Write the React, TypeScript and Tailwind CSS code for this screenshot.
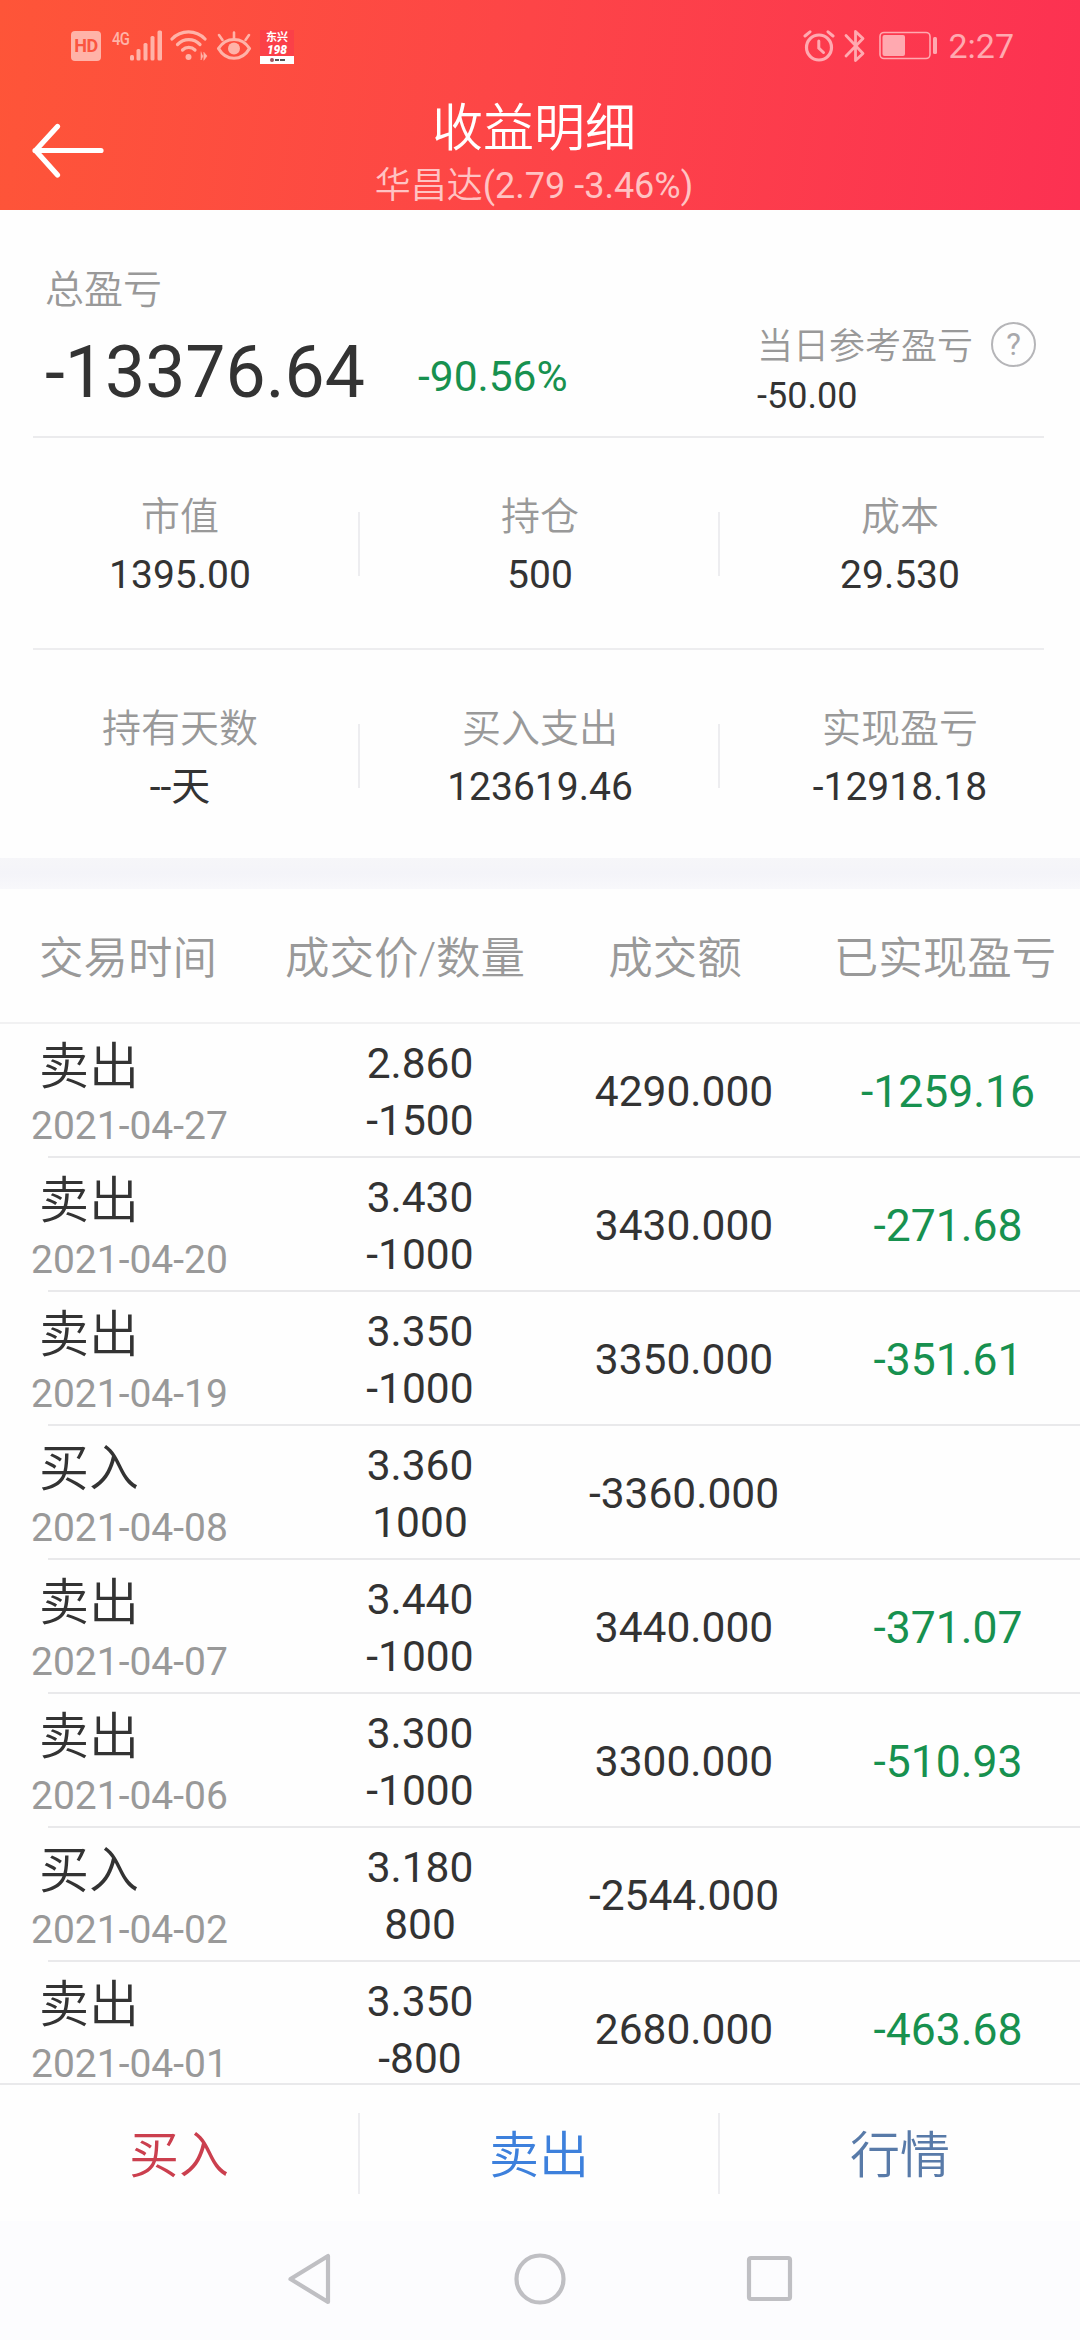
import React from "react";

type Stat = { label: string; value: string };
type Trade = {
  type: string;
  date: string;
  price: string;
  qty: string;
  amount: string;
  profit?: string;
};

const statRows: Stat[][] = [
  [
    { label: "市值", value: "1395.00" },
    { label: "持仓", value: "500" },
    { label: "成本", value: "29.530" },
  ],
  [
    { label: "持有天数", value: "--天" },
    { label: "买入支出", value: "123619.46" },
    { label: "实现盈亏", value: "-12918.18" },
  ],
];

const trades: Trade[] = [
  { type: "卖出", date: "2021-04-27", price: "2.860", qty: "-1500", amount: "4290.000", profit: "-1259.16" },
  { type: "卖出", date: "2021-04-20", price: "3.430", qty: "-1000", amount: "3430.000", profit: "-271.68" },
  { type: "卖出", date: "2021-04-19", price: "3.350", qty: "-1000", amount: "3350.000", profit: "-351.61" },
  { type: "买入", date: "2021-04-08", price: "3.360", qty: "1000", amount: "-3360.000" },
  { type: "卖出", date: "2021-04-07", price: "3.440", qty: "-1000", amount: "3440.000", profit: "-371.07" },
  { type: "卖出", date: "2021-04-06", price: "3.300", qty: "-1000", amount: "3300.000", profit: "-510.93" },
  { type: "买入", date: "2021-04-02", price: "3.180", qty: "800", amount: "-2544.000" },
  { type: "卖出", date: "2021-04-01", price: "3.350", qty: "-800", amount: "2680.000", profit: "-463.68" },
];

function HdIcon() {
  return (
    <span className="flex h-[30px] w-[30px] items-center justify-center rounded-[4px] bg-[#ffb3a8] text-[18px] leading-[30px] font-bold tracking-[-0.5px] text-[#fb5540]">
      HD
    </span>
  );
}

function SignalIcon() {
  return (
    <svg className="block" width="34" height="32" viewBox="0 0 34 32" fill="#ffb3a8">
      <rect x="1" y="25" width="4" height="5.500" rx="1.500" />
      <rect x="7.500" y="19" width="4" height="11.500" rx="1.500" />
      <rect x="14.500" y="13" width="4" height="17.500" rx="1.500" />
      <rect x="21.500" y="6" width="4" height="24.500" rx="1.500" />
      <rect x="28.500" y="0.500" width="4.500" height="30" rx="1.500" />
    </svg>
  );
}

function WifiIcon() {
  return (
    <svg className="block" width="38" height="32" viewBox="0 0 38 32" fill="none" stroke="#ffb3a8" strokeWidth="3.200" strokeLinecap="round">
      <path d="M2 9C11 -0.500 26 -0.500 35 9" />
      <path d="M7.500 14.500C14 8 23.500 8 30 14.500" />
      <path d="M12.500 20C16 16.500 21.500 16.500 25 20" />
      <circle cx="18.500" cy="27" r="3" fill="#ffb3a8" stroke="none" />
      <path d="M31 22v8l2-4M34 22.500l3 3.500l-3 4z" fill="#ffb3a8" strokeWidth="0.600" />
    </svg>
  );
}

function EyeIcon() {
  return (
    <svg className="block" width="36" height="32" viewBox="0 0 36 32" fill="none" stroke="#ffb3a8" strokeWidth="3.200" strokeLinecap="round" strokeLinejoin="round">
      <path d="M2.500 18.500C10 6.500 26 6.500 33.500 18.500C26 31.500 10 31.500 2.500 18.500Z" />
      <circle cx="18" cy="18.500" r="6" fill="#ffb3a8" stroke="none" />
      <path d="M18 2.500v6M3 5l3.500 5M33 5l-3.500 5" strokeWidth="2.600" />
    </svg>
  );
}

function BrokerBadge() {
  return (
    <span className="mt-[2px] flex h-[34px] w-[34px] flex-col items-center bg-[#fb4048] text-white">
      <span className="h-[13px] text-[11px] leading-[16px] font-bold">东兴</span>
      <span className="h-[13px] text-[12px] leading-[14px] font-black italic">198</span>
      <span className="flex h-[8px] w-[34px] items-center justify-center gap-[1px] bg-white">
        <i className="h-[4px] w-[4px] rounded-full bg-[#a05560]" />
        <i className="h-[2px] w-[4px] bg-[#555]" />
        <i className="h-[2px] w-[5px] bg-[#555]" />
      </span>
    </span>
  );
}

function AlarmIcon() {
  return (
    <svg className="block" width="32" height="32" viewBox="0 0 32 32" fill="none" stroke="#ffa9b0" strokeWidth="3.200" strokeLinecap="round">
      <circle cx="16" cy="17.500" r="12.500" />
      <path d="M15.800 11v7l4.700 4.500" strokeWidth="3" />
      <path d="M2 6l5-4.200M30 6l-5-4.200" strokeWidth="3" />
    </svg>
  );
}

function BluetoothIcon() {
  return (
    <svg className="block" width="22" height="34" viewBox="0 0 22 34" fill="none" stroke="#ffa9b0" strokeWidth="2.800" strokeLinecap="round" strokeLinejoin="round">
      <path d="M2 6.500L19 24.500L11.500 31.500V2.500L19 9.500L2 27" />
    </svg>
  );
}

function BatteryIcon() {
  return (
    <svg className="block" width="60" height="30" viewBox="0 0 60 30" fill="none">
      <rect x="1" y="1.500" width="50" height="26" rx="4" stroke="#ffa9b0" strokeWidth="1.600" />
      <rect x="3.500" y="4" width="22.500" height="21" rx="2" fill="#ffa9b0" />
      <rect x="54" y="6" width="4" height="17" rx="1.500" fill="#ffa9b0" />
    </svg>
  );
}

function Header() {
  return (
    <header className="relative h-[210px] shrink-0 bg-[linear-gradient(98deg,#fe5538_0%,#fd4547_48%,#fc3152_100%)]">
      <div className="flex h-[92px] items-center justify-between pr-[66px] pl-[71px]">
        <div className="flex items-center">
          <HdIcon />
          <span className="ml-[11px] flex h-[30px] w-[17px] items-start text-[19px] leading-[15px] font-medium tracking-[-1px] text-[#ffb3a8]">
            <span className="origin-left scale-x-[0.78]">4G</span>
          </span>
          <SignalIcon />
          <span className="ml-[7px]"><WifiIcon /></span>
          <span className="ml-[8px]"><EyeIcon /></span>
          <span className="ml-[8px]"><BrokerBadge /></span>
        </div>
        <div className="flex items-center">
          <AlarmIcon />
          <span className="ml-[9px]"><BluetoothIcon /></span>
          <span className="ml-[13px]"><BatteryIcon /></span>
          <span className="ml-[9px] text-[34px] leading-[40px] text-[#ffa9b0]">2:27</span>
        </div>
      </div>
      <button className="absolute top-[120px] left-[29px]" aria-label="返回">
        <svg className="block" width="78" height="62" viewBox="0 0 78 62" fill="none" stroke="#fff" strokeWidth="5.200" strokeLinecap="round" strokeLinejoin="round">
          <path d="M72 30.500H6M28.500 6.500L6.500 30.500L28.500 55" />
        </svg>
      </button>
      <div className="flex flex-col items-center pr-[12px] text-white">
        <h1 className="mt-[2px] text-[51px] leading-[70px] font-[350]">收益明细</h1>
        <p className="text-[36px] leading-[44px] text-[#ffc3c3]">
          <span className="font-[350]">华昌达</span>(2.79 -3.46%)
        </p>
      </div>
    </header>
  );
}

function Summary() {
  return (
    <section className="mr-[36px] ml-[33px] flex h-[228px] shrink-0 border-b-2 border-[#ebebed]">
      <div className="w-[724px] pl-[12px]">
        <div className="mt-[56px] text-[39px] leading-[48px] font-[350] text-[#999]">总盈亏</div>
        <div className="flex items-center">
          <span className="mt-[12px] w-[373px] text-[71.500px] leading-[94px] text-[#333]">-13376.64</span>
          <span className="mt-[20px] text-[42.500px] leading-[50px] text-[#17914f]">-90.56%</span>
        </div>
      </div>
      <div>
        <div className="mt-[112px] flex h-[46px] items-center">
          <span className="mt-[4px] w-[234px] text-[36px] leading-[46px] font-[350] text-[#999]">当日参考盈亏</span>
          <span className="-mt-[1px] flex h-[45px] w-[45px] items-center justify-center rounded-full border-2 border-[#b5b5b8] text-[31px] leading-[42px] text-[#a8a8ac]">?</span>
        </div>
        <div className="mt-[5px] text-[36px] leading-[46px] text-[#333]">-50.00</div>
      </div>
    </section>
  );
}

function StatRow({ stats }: { stats: Stat[] }) {
  return (
    <div className="flex">
      {stats.map((s, i) => (
        <div key={s.label} className="relative flex w-[360px] shrink-0 flex-col items-center">
          <span className="mt-[1px] text-[39px] leading-[56px] font-[350] text-[#999]">{s.label}</span>
          <span className="mt-[2px] text-[39px] leading-[56px] text-[#333]">{s.value}</span>
          {i < 2 && <i className="absolute top-[24px] right-0 h-[64px] w-[2px] bg-[#ededf0]" />}
        </div>
      ))}
    </div>
  );
}

function TradeRow({ trade }: { trade: Trade }) {
  return (
    <div className="group relative flex h-[134px] shrink-0 items-center text-[42.500px] text-[#333]">
      <div className="flex h-full w-[288px] flex-col">
        <span className="mt-[12px] pl-[39px] text-[50px] leading-[62px] font-[350]">{trade.type}</span>
        <span className="mt-[8px] pl-[31px] text-[39px] leading-[40px] text-[#999]">{trade.date}</span>
      </div>
      <div className="flex h-full w-[264px] flex-col items-center">
        <span className="mt-[11px] leading-[57px]">{trade.price}</span>
        <span className="leading-[57px]">{trade.qty}</span>
      </div>
      <span className="mt-[2px] w-[264px] text-center leading-[60px]">{trade.amount}</span>
      <span className="mt-[2px] w-[264px] text-center text-[44.500px] leading-[60px] text-[#17914f]">{trade.profit}</span>
      <i className="absolute right-0 bottom-0 left-[48px] h-[2px] bg-[#e9e9eb] group-last:hidden" />
    </div>
  );
}

export default function App() {
  return (
    <div className="flex h-[2340px] w-[1080px] flex-col overflow-hidden bg-[#fefefe] font-['Roboto','Noto_Sans_CJK_SC',sans-serif] whitespace-nowrap">
      <Header />
      <Summary />
      <section className="h-[420px] shrink-0">
        <div className="mr-[36px] ml-[33px] h-[212px] border-b-2 border-[#ededef] pt-[50px]">
          <div className="-mr-[36px] -ml-[33px]">
            <StatRow stats={statRows[0]} />
          </div>
        </div>
        <div className="pt-[50px]">
          <StatRow stats={statRows[1]} />
        </div>
      </section>
      <div className="h-[31px] shrink-0 bg-[linear-gradient(180deg,#f6f6f9,#f4f4f9_50%,#f8f8fb)]" />

      <div className="grid h-[135px] shrink-0 grid-cols-4 items-center border-b-2 border-[#f1f1f2] pt-[6px] text-center text-[44.500px] leading-[60px] font-[350] text-[#999]">
        <span className="pr-[14px]">交易时间</span>
        <span>成交价/数量</span>
        <span>成交额</span>
        <span>已实现盈亏</span>
      </div>

      <div className="flex h-[1059px] shrink-0 flex-col">
        {trades.map((t) => (
          <TradeRow key={t.date} trade={t} />
        ))}
      </div>

      <div className="flex h-[138px] shrink-0 items-center border-t-2 border-[#e9e9eb] text-center text-[50px] leading-[76px] font-[350]">
        <button className="w-[360px] border-r-2 border-[#ededf0] pt-[5px] text-[#cb3f4e]">买入</button>
        <button className="w-[360px] border-r-2 border-[#ededf0] pt-[5px] text-[#3d80dc]">卖出</button>
        <button className="w-[360px] pt-[5px] text-[#587aa8]">行情</button>
      </div>

      <nav className="flex grow items-start bg-[#fcfcfe] pt-[28px] pl-[284px]">
        <svg className="block" width="512" height="60" viewBox="0 0 512 60" fill="none" stroke="#bfbfc3" strokeWidth="4.200" strokeLinejoin="round">
          <path d="M44 7V53L6.500 30Z" />
          <circle cx="256" cy="30" r="23.500" />
          <rect x="465" y="9" width="41" height="41" rx="2" />
        </svg>
      </nav>
    </div>
  );
}
